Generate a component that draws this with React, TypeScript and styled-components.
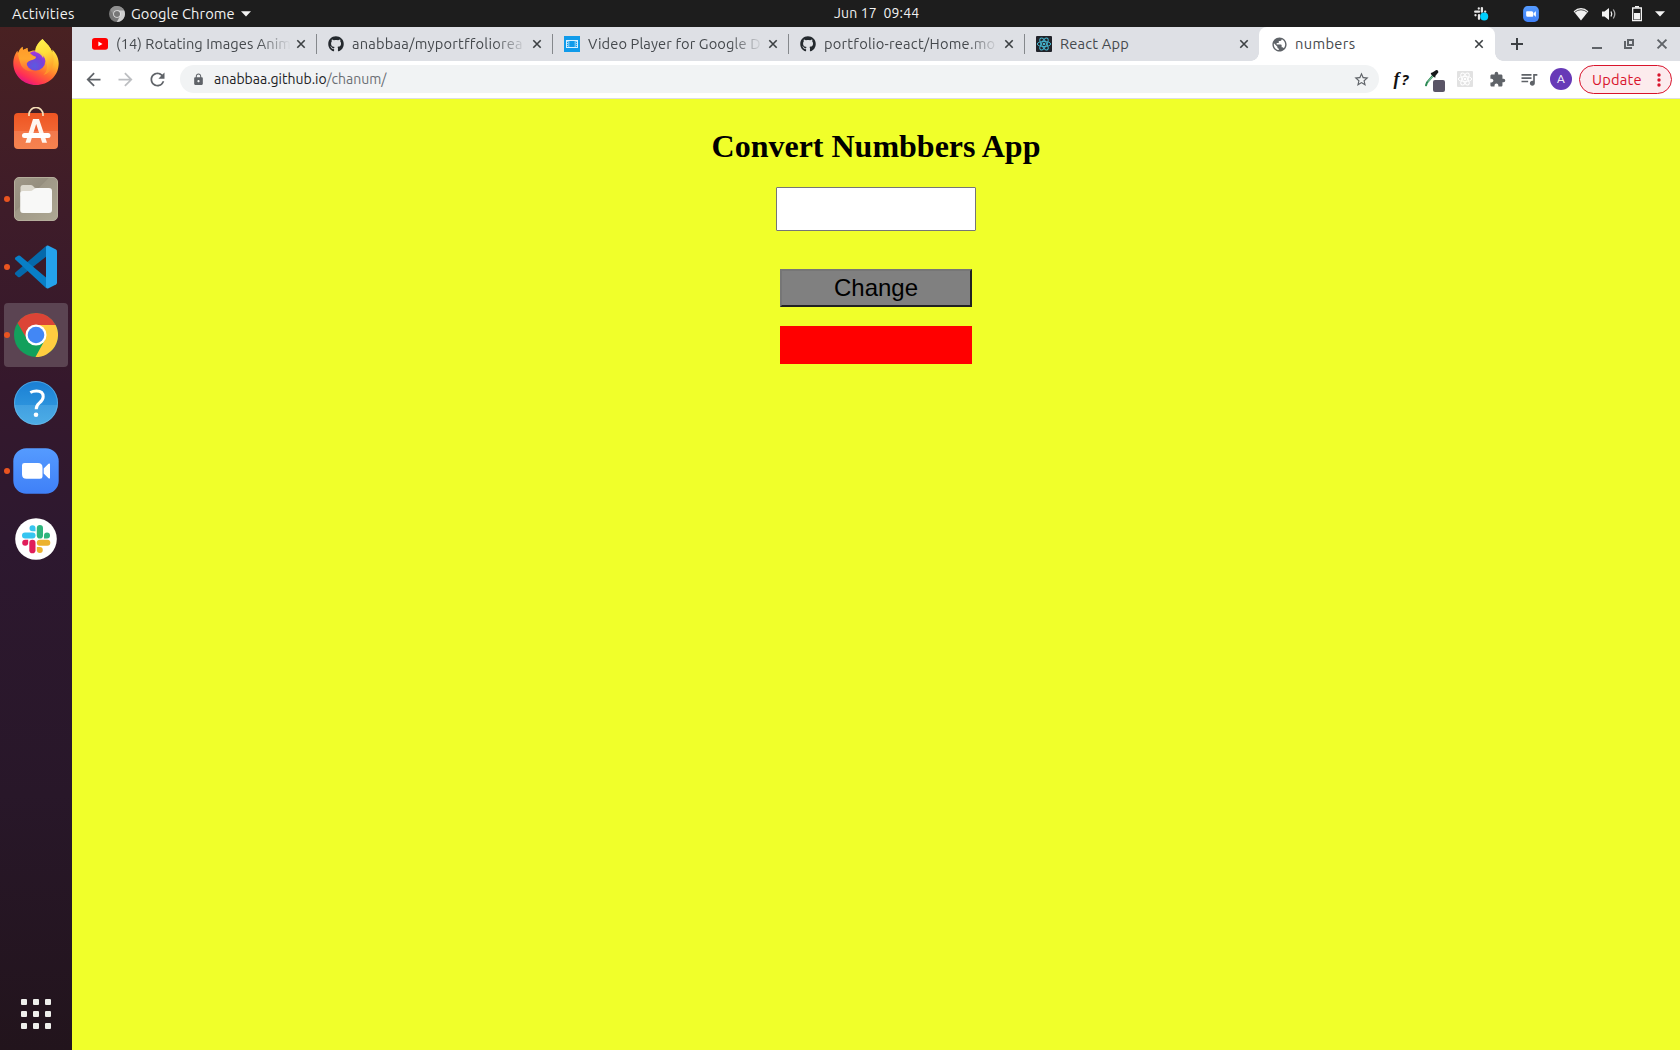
import React from "react";
import styled, { createGlobalStyle } from "styled-components";
import { FaGithub } from "react-icons/fa";
import {
  MdArrowBack,
  MdArrowForward,
  MdExtension,
  MdLock,
  MdPublic,
  MdQueueMusic,
  MdRefresh,
  MdStarBorder,
} from "react-icons/md";

const uiFont = `"Ubuntu", "Noto Sans", "Open Sans", sans-serif`;

const GlobalStyle = createGlobalStyle`
  * { box-sizing: border-box; }
  html, body { margin: 0; padding: 0; }
  body { font-family: ${uiFont}; overflow: hidden; }
  svg { display: block; flex: none; }
`;

const Desktop = styled.div`
  width: 1680px;
  height: 1050px;
  display: flex;
  flex-direction: column;
`;

const Label = styled.span<{ $spacing?: number; $size?: number }>`
  white-space: pre;
  font-size: ${(p) => p.$size ?? 14}px;
  letter-spacing: ${(p) => p.$spacing ?? 0}px;
`;

/* ---------- top panel ---------- */

const Panel = styled.header`
  flex: none;
  height: 27px;
  background: #1d1d1d;
  color: #f2f2f2;
  display: grid;
  grid-template-columns: 834px 1fr auto;
  align-items: center;
  font-size: 14px;
  line-height: 20px;
`;

const PanelLeft = styled.div`
  display: flex;
  align-items: center;
  padding-left: 12px;
`;

const Activities = styled.div`
  width: 97px;
`;

const AppMenu = styled.div`
  display: flex;
  align-items: center;
  gap: 6px;
`;

const Clock = styled.div`
  padding-bottom: 2px;
`;

const Tray = styled.div`
  display: flex;
  align-items: center;
  padding-right: 15px;
`;

const TrayItem = styled.div<{ $before: number }>`
  margin-left: ${(p) => p.$before}px;
`;

const Body = styled.div`
  flex: 1;
  display: flex;
  min-height: 0;
`;

/* ---------- dock ---------- */

const Dock = styled.nav`
  flex: none;
  width: 72px;
  padding: 4px 4px 0;
  display: flex;
  flex-direction: column;
  gap: 4px;
  background: linear-gradient(#492122 0%, #3e1c29 18%, #35182c 35%, #2d182f 50%, #281729 75%, #22141c 100%);
`;

const DockItem = styled.div<{ $active?: boolean; $running?: boolean }>`
  position: relative;
  width: 64px;
  height: 64px;
  border-radius: 4px;
  display: flex;
  align-items: center;
  justify-content: center;
  background: ${(p) => (p.$active ? "#5b4452" : "transparent")};
  &::before {
    content: "";
    display: ${(p) => (p.$running ? "block" : "none")};
    position: absolute;
    left: 0;
    top: 29px;
    width: 6px;
    height: 6px;
    border-radius: 50%;
    background: #e95420;
  }
`;

const AppGrid = styled.div`
  margin: auto auto 21px 17px;
  display: grid;
  grid-template-columns: repeat(3, 6px);
  gap: 6px;
`;

const GridDot = styled.i`
  height: 6px;
  border-radius: 1px;
  background: #efefec;
`;

/* ---------- browser ---------- */

const Browser = styled.main`
  flex: 1;
  min-width: 0;
  display: flex;
  flex-direction: column;
`;

const TabStrip = styled.div`
  flex: none;
  height: 34px;
  padding-left: 8px;
  background: #dee0e5;
  display: flex;
  color: #45494d;
`;

const Tab = styled.div<{ $active?: boolean; $divider?: boolean }>`
  position: relative;
  width: 236px;
  height: 34px;
  margin-left: ${(p) => (p.$active ? -1 : 0)}px;
  padding: 0 7px 0 12px;
  display: flex;
  align-items: center;
  background: ${(p) => (p.$active ? "#fff" : "transparent")};
  border-radius: 8px 8px 0 0;
  &::after {
    content: "";
    display: ${(p) => (p.$divider ? "block" : "none")};
    position: absolute;
    right: -1px;
    top: 7px;
    width: 1px;
    height: 20px;
    background: #85888c;
  }
`;

const Flare = styled.i<{ $side: "left" | "right" }>`
  position: absolute;
  bottom: 0;
  ${(p) => p.$side}: -8px;
  width: 8px;
  height: 8px;
  background: radial-gradient(
    circle at ${(p) => p.$side} top,
    transparent 7.5px,
    #fff 8px
  );
`;

const Favicon = styled.div`
  width: 16px;
  height: 16px;
  margin-right: 8px;
  display: flex;
  align-items: center;
  justify-content: center;
`;

const TabTitle = styled.div<{ $fade?: boolean }>`
  width: 174px;
  padding-bottom: 2px;
  overflow: hidden;
  white-space: nowrap;
  line-height: 20px;
  mask-image: ${(p) =>
    p.$fade ? "linear-gradient(to right, #000 142px, transparent 175px)" : "none"};
`;

const TabClose = styled.div<{ $inset?: boolean }>`
  width: 16px;
  margin-left: ${(p) => (p.$inset ? 2 : 3)}px;
  display: flex;
  justify-content: center;
`;

const StripButton = styled.div<{ $width: number }>`
  width: ${(p) => p.$width}px;
  display: flex;
  align-items: center;
  justify-content: center;
`;

const WindowControls = styled.div`
  margin-left: auto;
  display: flex;
  padding-right: 2px;
`;

const Toolbar = styled.div`
  flex: none;
  height: 38px;
  padding: 0 8px 0 6px;
  display: flex;
  align-items: flex-start;
  background: #fff;
  border-bottom: 1px solid #dcdde1;
  color: #5f6368;
`;

const Navigation = styled.div`
  display: flex;
  width: 96px;
`;

const ToolSlot = styled.div<{ $dim?: boolean }>`
  width: 32px;
  height: 36px;
  display: flex;
  align-items: center;
  justify-content: center;
  color: ${(p) => (p.$dim ? "#bcbec1" : "inherit")};
`;

const NavSlot = styled(ToolSlot)`
  padding-right: 1px;
`;

const Omnibox = styled.div`
  flex: 1;
  height: 28px;
  margin: 4px 6px 0;
  padding: 0 9px 0 12px;
  border-radius: 14px;
  background: #f1f3f4;
  display: flex;
  align-items: center;
  line-height: 20px;
`;

const Address = styled.div`
  flex: 1;
  margin-left: 9px;
  padding-bottom: 2px;
  color: #6a6e73;
`;

const Host = styled.span`
  color: #202124;
`;

const FontFinder = styled.span`
  display: flex;
  align-items: baseline;
  gap: 2px;
  padding-bottom: 1px;
  color: #111;
  font: italic bold 18px/20px "Liberation Serif", serif;
`;

const QuestionMark = styled.span`
  font: italic bold 15px/20px "Open Sans", sans-serif;
`;

const Avatar = styled.div`
  width: 22px;
  height: 22px;
  border-radius: 50%;
  background: #673ab7;
  color: #fff;
  font-size: 12px;
  line-height: 22px;
  text-align: center;
`;

const UpdateButton = styled.div`
  width: 93px;
  height: 29px;
  margin: 4px 0 0 2px;
  padding: 0 10px 0 12px;
  display: flex;
  align-items: center;
  justify-content: space-between;
  border: 1px solid #d8132b;
  border-radius: 15px;
  background: #fcebed;
  color: #d8132b;
`;

/* ---------- web page ---------- */

const Page = styled.section`
  flex: 1;
  background: #f0ff2a;
  display: flex;
  flex-direction: column;
  align-items: center;
  padding-top: 29px;
`;

const Heading = styled.h1`
  margin: 0;
  height: 59px;
  color: #000;
  font: bold 32px/36px "Liberation Serif", "Times New Roman", serif;
`;

const NumberInput = styled.input`
  width: 200px;
  height: 44px;
  padding: 1px 2px;
  border: 1px solid #767676;
  border-radius: 1px;
  background: #fff;
  outline: none;
`;

const ChangeButton = styled.button`
  width: 192px;
  height: 38px;
  margin-top: 38px;
  padding: 0;
  border: 2px solid;
  border-color: #767676 #212121 #212121 #767676;
  border-radius: 0;
  background: #808080;
  color: #000;
  font: 24px/30px "Liberation Sans", Arial, sans-serif;
`;

const Result = styled.div`
  width: 192px;
  height: 38px;
  margin-top: 19px;
  background: #ff0000;
`;

/* ---------- drawings ---------- */

const Firefox = () => (
  <svg width="48" height="48" viewBox="0 0 48 48">
    <defs>
      <linearGradient id="fxBody" x1="0.8" y1="0.1" x2="0.3" y2="1">
        <stop offset="0" stopColor="#fff14a" />
        <stop offset="0.35" stopColor="#ffb52c" />
        <stop offset="0.62" stopColor="#ff6a30" />
        <stop offset="0.85" stopColor="#ff2f55" />
        <stop offset="1" stopColor="#e0128c" />
      </linearGradient>
      <radialGradient id="fxGlobe" cx="0.45" cy="0.75" r="0.8">
        <stop offset="0" stopColor="#5a5be0" />
        <stop offset="0.55" stopColor="#7a41d8" />
        <stop offset="1" stopColor="#b833e0" />
      </radialGradient>
      <linearGradient id="fxHead" x1="0" y1="0" x2="0" y2="1">
        <stop offset="0" stopColor="#ff9a2a" />
        <stop offset="0.5" stopColor="#ffa62e" />
        <stop offset="1" stopColor="#ff6a34" />
      </linearGradient>
      <linearGradient id="fxTail" x1="0" y1="0" x2="0.3" y2="1">
        <stop offset="0" stopColor="#fff44f" />
        <stop offset="0.5" stopColor="#ffe03b" />
        <stop offset="1" stopColor="#ff9a2a" />
      </linearGradient>
    </defs>
    <path d="M30.500 0c2 3 5.500 5 8 9.500.8 1.300 1.300 2.500 1.500 4 .5-1 .5-2 .3-3C45 15 46.700 20 46.700 24.500 46.500 37 36.500 46 24 46S1.500 36.500 1.300 24.500C1.200 19.500 3 14.500 5.500 11.800L6 14.500c1-3 2.500-5.300 4.700-6.800-.2 1.200 0 2.500.3 3.300l4.500-2c-.2 1.800.2 3 1 4 2-1.200 4.500-1.800 7.500-1.500C23.500 7.500 27 3 30.500 0z" fill="url(#fxBody)" />
    <circle cx="23.600" cy="21.800" r="9.800" fill="url(#fxGlobe)" />
    <path d="M30.500 0c2 3 5.500 5 8 9.500 3 5 4 10 2.500 16-1.200 5-4.500 9-9.500 10.500 3-3 4.500-7 3-12-.8-3-1.500-5-3.500-7l.3 2.500c-2-4-4.500-6-8-6.500C22.500 8 27 3 30.500 0z" fill="url(#fxTail)" opacity=".9" />
    <path d="M6 14.500c1-3 2.500-5.300 4.700-6.800-.2 1.200 0 2.500.3 3.300l4.500-2c-.2 2 .3 3.500 2 4.500 1.500 2 3.500 3.300 6.500 4.300.3 1.500-2 3-5 3.500-2.500 1-3.800 1.800-4.300 3.500.5 3.500 3 6.500 7 7.200-5 1-10-1-12.500-5.500C8 23.500 6.500 19 6 14.500z" fill="url(#fxHead)" />
  </svg>
);

const Store = () => (
  <svg width="48" height="48" viewBox="0 0 48 48">
    <defs>
      <linearGradient id="bag" x1="0" y1="0" x2="0" y2="1">
        <stop offset="0" stopColor="#ee5522" />
        <stop offset="0.5" stopColor="#f26633" />
        <stop offset="0.51" stopColor="#f3794c" />
        <stop offset="1" stopColor="#f5834f" />
      </linearGradient>
    </defs>
    <rect x="2" y="6" width="44" height="36" rx="4" fill="url(#bag)" />
    <path d="M17 9V7.500a7 7 0 0 1 14 0V9" fill="none" stroke="#f5dfb8" strokeWidth="1.700" />
    <path d="M13.500 35.800L21 12h6l8 23.800h-4.800L24.200 17l-5.900 18.800z" fill="#fff6ef" />
    <rect x="10" y="26" width="28.500" height="5" rx="2.500" fill="#fff" />
  </svg>
);

const Files = () => (
  <svg width="48" height="48" viewBox="0 0 48 48">
    <defs>
      <linearGradient id="filesBg" x1="0" y1="0" x2="1" y2="1">
        <stop offset="0" stopColor="#a09888" />
        <stop offset="0.4" stopColor="#958e7e" />
        <stop offset="0.41" stopColor="#9f9887" />
        <stop offset="1" stopColor="#aea893" />
      </linearGradient>
    </defs>
    <rect x="2.500" y="2.500" width="43" height="43" rx="4.500" fill="url(#filesBg)" stroke="#b5ae9c" />
    <path d="M8.500 12a2.500 2.500 0 0 1 2.500-2h8q1.500 0 2.500 1.500T24 13h4v8H8.500z" fill="#dcd8cd" />
    <path d="M8.200 18.500Q8.200 16 11 16h7q2 0 3.500-1.500T25 13h12q3 0 3 3v19q0 3-3 3H11q-2.800 0-2.800-3z" fill="#f8f8f7" />
  </svg>
);

const Code = () => (
  <svg width="48" height="48" viewBox="0 0 48 48">
    <path d="M3.300 29.500L34 3v10.700L8 34q-1 .6-2 0l-2.700-2.500q-.8-1 0-2z" fill="#0569ab" />
    <path d="M3.300 16.500q-.8-1 0-2L6 12.700q1-.6 2 0L34 34.500V45z" fill="#087fc7" />
    <path d="M34 3.500q.5-1.300 2-1l8 4q1 .7 1 2v31q0 1.300-1 2l-8 4q-1.500.3-2-1z" fill="#24a2ec" />
  </svg>
);

const Chrome = ({ size = 48, gray = false }: { size?: number; gray?: boolean }) => (
  <svg width={size} height={size} viewBox={gray ? "2 2 44 44" : "0 0 48 48"}>
    <circle cx="24" cy="24" r="22" fill={gray ? "#777" : "#12a05c"} />
    <path d="M24 14h19.600A22 22 0 0 1 23.500 46L32.800 29z" fill={gray ? "#cfcfcf" : "#ffcd40"} />
    <path d="M5.500 12A22 22 0 0 1 43.600 14H24a10 10 0 0 0-8.800 14.500z" fill={gray ? "#8f8f8f" : "#dc4436"} />
    <circle cx="24" cy="24" r="10.500" fill={gray ? "#e5e5e5" : "#fff"} />
    <circle cx="24" cy="24" r="8.300" fill={gray ? "#777" : "#4287f5"} />
  </svg>
);

const Help = () => (
  <svg width="48" height="48" viewBox="0 0 48 48">
    <defs>
      <linearGradient id="helpBg" x1="0" y1="0" x2="0" y2="1">
        <stop offset="0" stopColor="#1a7fd4" />
        <stop offset="0.54" stopColor="#2b92dc" />
        <stop offset="0.55" stopColor="#41a0e1" />
        <stop offset="1" stopColor="#4dade6" />
      </linearGradient>
    </defs>
    <circle cx="24" cy="24" r="22" fill="url(#helpBg)" />
    <circle cx="24" cy="24" r="21.500" fill="none" stroke="#7cc3ee" strokeOpacity=".5" />
    <path d="M18.300 13.500Q21 12 24.500 12c4.200 0 6.700 2.200 6.700 5.700 0 3-1.700 4.600-4 6.500-2.200 1.800-3 3-3 6" fill="none" stroke="#fff" strokeWidth="3" />
    <circle cx="24" cy="35.700" r="2.300" fill="#fff" />
  </svg>
);

const Zoom = ({ size = 48 }: { size?: number }) => (
  <svg width={size} height={size} viewBox={size < 48 ? "1 1 46 46" : "0 0 48 48"}>
    <defs>
      <linearGradient id={`zm${size}`} x1="0" y1="0" x2="0" y2="1">
        <stop offset="0" stopColor="#559bff" />
        <stop offset="1" stopColor="#3f80f7" />
      </linearGradient>
    </defs>
    <rect x="1.300" y="1.300" width="45.400" height="45.400" rx="13" fill={`url(#zm${size})`} />
    <path d="M10 18.300Q10 16 12.500 16H26q4.500 0 4.500 4.500v9q0 2.300-2.500 2.300H14.500q-4.500 0-4.500-4.500zM31.700 21.500l4.800-4.700q1.500-1 1.500.5v13.400q0 1.500-1.500.5l-4.800-4.700z" fill="#fff" />
  </svg>
);

const slackArms = (c: string[]) => (
  <>
    <g fill={c[0]}>
      <path d="M20.500 10.300a3 3 0 0 1 3 3v3h-3a3 3 0 0 1 0-6z" />
      <rect x="10" y="17.500" width="13.500" height="6" rx="3" />
    </g>
    <g fill={c[1]}>
      <rect x="24.800" y="10" width="6.200" height="13.500" rx="3.100" />
      <path d="M32 23.500v-3a3 3 0 1 1 3 3z" />
    </g>
    <g fill={c[2]}>
      <rect x="24.800" y="24.800" width="13.500" height="6" rx="3" />
      <path d="M24.800 32h3a3 3 0 1 1-3 3z" />
    </g>
    <g fill={c[3]}>
      <path d="M16.200 24.800v3a3 3 0 1 1-3-3z" />
      <rect x="17.300" y="24.800" width="6.200" height="13.500" rx="3.100" />
    </g>
  </>
);

const Slack = () => (
  <svg width="48" height="48" viewBox="0 0 48 48">
    <circle cx="24" cy="24" r="20.800" fill="#fff" />
    {slackArms(["#36c5f0", "#2eb67d", "#ecb22e", "#e01e5a"])}
  </svg>
);

const SlackTray = () => (
  <svg width="16" height="16" viewBox="0 0 16 16">
    <g fill="none" stroke="#e6e6e6" strokeWidth="2.300" strokeLinecap="round">
      <path d="M2.200 5.700h3.800M8.900 2.100v3.600M6 9.200v3.600M9.200 9h3.600" />
      <path d="M5.800 2.500v.1M12.200 5.600v.1M2.500 9.200v.1" />
    </g>
    <circle cx="11.200" cy="10.600" r="4" fill="#00d0ff" />
  </svg>
);

const Wifi = () => (
  <svg width="16" height="16" viewBox="0 0 16 16">
    <path d="M8 14.500L.6 5.200Q4 2 8 2t7.400 3.200z" fill="#f2f2f2" />
    <path d="M1.800 6.200Q4.700 3.800 8 3.800t6.200 2.400" fill="none" stroke="#555" strokeWidth="1" />
  </svg>
);

const Volume = () => (
  <svg width="16" height="16" viewBox="0 0 16 16">
    <path d="M1 5.500h2.500L8 2v12l-4.500-3.500H1z" fill="#f2f2f2" />
    <path d="M10 5.500q1.500 2.500 0 5" fill="none" stroke="#f2f2f2" strokeWidth="1.300" />
    <path d="M12.300 3.500q3 4.500 0 9" fill="none" stroke="#aaa" strokeWidth="1.300" />
  </svg>
);

const Battery = () => (
  <svg width="10" height="16" viewBox="0 0 10 16">
    <path d="M3 .800h4" stroke="#f2f2f2" strokeWidth="1.600" />
    <path d="M.650 2h8.700v12.700H.650z" fill="none" stroke="#f2f2f2" strokeWidth="1.300" />
    <rect x="2" y="7" width="6" height="6.500" fill="#f2f2f2" />
  </svg>
);

const Caret = () => (
  <svg width="10" height="6" viewBox="0 0 10 6">
    <path d="M0 .3h10L5 5.500z" fill="#f2f2f2" />
  </svg>
);

const Cross = ({ size, color }: { size: number; color: string }) => (
  <svg width={size} height={size} viewBox="0 0 10 10">
    <path d="M1.300 1.300l7.400 7.400M8.700 1.300L1.300 8.700" stroke={color} strokeWidth="1.600" />
  </svg>
);

const YouTube = () => (
  <svg width="16" height="16" viewBox="0 0 16 16">
    <rect y="2" width="16" height="11.800" rx="2.800" fill="#f00" />
    <path d="M6.400 5.500v4.800L10.500 8z" fill="#fff" />
  </svg>
);

const VideoIcon = () => (
  <svg width="16" height="16" viewBox="0 0 16 16">
    <rect width="16" height="16" fill="#109bea" />
    <rect x="2.500" y="4.500" width="11" height="7" fill="none" stroke="#d9f0ff" />
    <path d="M4.800 4.500v7M11.200 4.500v7" stroke="#d9f0ff" strokeWidth=".700" />
    <path d="M3.500 5v6M12.500 5v6" stroke="#d9f0ff" strokeWidth=".700" strokeDasharray="1 1" />
  </svg>
);

const Atom = ({ bg, fg }: { bg: string; fg: string }) => (
  <svg width="16" height="16" viewBox="0 0 16 16">
    <rect width="16" height="16" rx="1" fill={bg} />
    <g fill="none" stroke={fg} strokeWidth="1">
      <ellipse cx="8" cy="8" rx="6.700" ry="2.600" />
      <ellipse cx="8" cy="8" rx="6.700" ry="2.600" transform="rotate(60 8 8)" />
      <ellipse cx="8" cy="8" rx="6.700" ry="2.600" transform="rotate(120 8 8)" />
    </g>
    <circle cx="8" cy="8" r="1.300" fill={fg} />
  </svg>
);

const Picker = () => (
  <svg width="26" height="26" viewBox="0 0 26 26">
    <path d="M6 19.300L7 16.500 14 8.500" fill="none" stroke="#2c8a55" strokeWidth="2" strokeLinecap="round" />
    <path d="M8 15.700L13 10" stroke="#c9ecd6" strokeWidth=".700" />
    <path d="M10.800 7l1.500-.5L14.800 5q2-1.700 3.200-.2t-.8 3L15.300 10l.2 1.500-1.500-.2-3-3z" fill="#16181a" />
    <rect x="13" y="14" width="12" height="12" rx="2" fill="#5a5566" />
  </svg>
);

const Minimize = () => (
  <svg width="12" height="12" viewBox="0 0 12 12">
    <rect x="0" y="9" width="10" height="2" fill="#5f6368" />
  </svg>
);

const Restore = () => (
  <svg width="12" height="12" viewBox="0 0 12 12">
    <path d="M4 2h5v5H4z" fill="none" stroke="#5f6368" strokeWidth="2" />
    <path d="M1 3v7h7" fill="none" stroke="#5f6368" strokeWidth="2" />
  </svg>
);

const Plus = () => (
  <svg width="12" height="12" viewBox="0 0 12 12">
    <path d="M6 0v12M0 6h12" stroke="#3c4043" strokeWidth="2" />
  </svg>
);

const MoreDots = () => (
  <svg width="4" height="16" viewBox="0 0 4 16">
    <circle cx="2" cy="3" r="1.700" fill="#d8132b" />
    <circle cx="2" cy="8" r="1.700" fill="#d8132b" />
    <circle cx="2" cy="13" r="1.700" fill="#d8132b" />
  </svg>
);

/* ---------- data ---------- */

const tabs = [
  { title: "(14) Rotating Images Anim", icon: <YouTube />, spacing: 0.05, fade: true },
  { title: "anabbaa/myportffoliorea", icon: <FaGithub size={16} color="#24292e" />, spacing: 0.2, fade: true },
  { title: "Video Player for Google D", icon: <VideoIcon />, spacing: 0.1, fade: true },
  { title: "portfolio-react/Home.mo", icon: <FaGithub size={16} color="#24292e" />, spacing: 0.22, fade: true },
  { title: "React App", icon: <Atom bg="#20232a" fg="#45b5cf" />, spacing: 0.2, fade: false },
  { title: "numbers", icon: <MdPublic size={17} color="#5f6368" />, spacing: 0.35, fade: false },
];

const dockApps = [
  { name: "firefox", icon: <Firefox /> },
  { name: "store", icon: <Store /> },
  { name: "files", icon: <Files />, running: true },
  { name: "code", icon: <Code />, running: true },
  { name: "chrome", icon: <Chrome />, running: true, active: true },
  { name: "help", icon: <Help /> },
  { name: "zoom", icon: <Zoom />, running: true },
  { name: "slack", icon: <Slack /> },
];

export default function App() {
  return (
    <Desktop>
      <GlobalStyle />
      <Panel>
        <PanelLeft>
          <Activities>
            <Label $size={14.667} $spacing={0.25}>Activities</Label>
          </Activities>
          <AppMenu>
            <Chrome size={16} gray />
            <Label $size={14.667} $spacing={0.07}>Google Chrome</Label>
            <Caret />
          </AppMenu>
        </PanelLeft>
        <Clock>
          <Label $spacing={0.15}>Jun 17  09:44</Label>
        </Clock>
        <Tray>
          <TrayItem $before={0}><SlackTray /></TrayItem>
          <TrayItem $before={34}><Zoom size={16} /></TrayItem>
          <TrayItem $before={34}><Wifi /></TrayItem>
          <TrayItem $before={12}><Volume /></TrayItem>
          <TrayItem $before={15}><Battery /></TrayItem>
          <TrayItem $before={13}><Caret /></TrayItem>
        </Tray>
      </Panel>
      <Body>
        <Dock>
          {dockApps.map((a) => (
            <DockItem key={a.name} $active={a.active} $running={a.running}>
              {a.icon}
            </DockItem>
          ))}
          <AppGrid>
            {Array.from({ length: 9 }, (_, i) => (
              <GridDot key={i} />
            ))}
          </AppGrid>
        </Dock>
        <Browser>
          <TabStrip>
            {tabs.map((t, i) => {
              const active = i === tabs.length - 1;
              return (
                <Tab key={t.title} $active={active} $divider={i < 4}>
                  {active && <Flare $side="left" />}
                  {active && <Flare $side="right" />}
                  <Favicon>{t.icon}</Favicon>
                  <TabTitle $fade={t.fade}>
                    <Label $size={14.667} $spacing={t.spacing}>{t.title}</Label>
                  </TabTitle>
                  <TabClose $inset={!t.fade}>
                    <Cross size={10} color="#3c4043" />
                  </TabClose>
                </Tab>
              );
            })}
            <StripButton $width={44}><Plus /></StripButton>
            <WindowControls>
              <StripButton $width={32}><Minimize /></StripButton>
              <StripButton $width={32}><Restore /></StripButton>
              <StripButton $width={32}><Cross size={12} color="#5f6368" /></StripButton>
            </WindowControls>
          </TabStrip>
          <Toolbar>
            <Navigation>
              <NavSlot><MdArrowBack size={21} /></NavSlot>
              <NavSlot $dim><MdArrowForward size={21} /></NavSlot>
              <NavSlot><MdRefresh size={21} /></NavSlot>
            </Navigation>
            <Omnibox>
              <MdLock size={13} />
              <Address>
                <Label><Host>anabbaa.github.io</Host>/chanum/</Label>
              </Address>
              <MdStarBorder size={17} />
            </Omnibox>
            <ToolSlot>
              <FontFinder>
                f<QuestionMark>?</QuestionMark>
              </FontFinder>
            </ToolSlot>
            <ToolSlot><Picker /></ToolSlot>
            <ToolSlot><Atom bg="#e2e2e2" fg="#fff" /></ToolSlot>
            <ToolSlot><MdExtension size={17} /></ToolSlot>
            <ToolSlot><MdQueueMusic size={20} /></ToolSlot>
            <ToolSlot><Avatar>A</Avatar></ToolSlot>
            <UpdateButton>
              <Label $size={14.667} $spacing={0.2}>Update</Label>
              <MoreDots />
            </UpdateButton>
          </Toolbar>
          <Page>
            <Heading>Convert Numbbers App</Heading>
            <NumberInput />
            <ChangeButton>Change</ChangeButton>
            <Result />
          </Page>
        </Browser>
      </Body>
    </Desktop>
  );
}
